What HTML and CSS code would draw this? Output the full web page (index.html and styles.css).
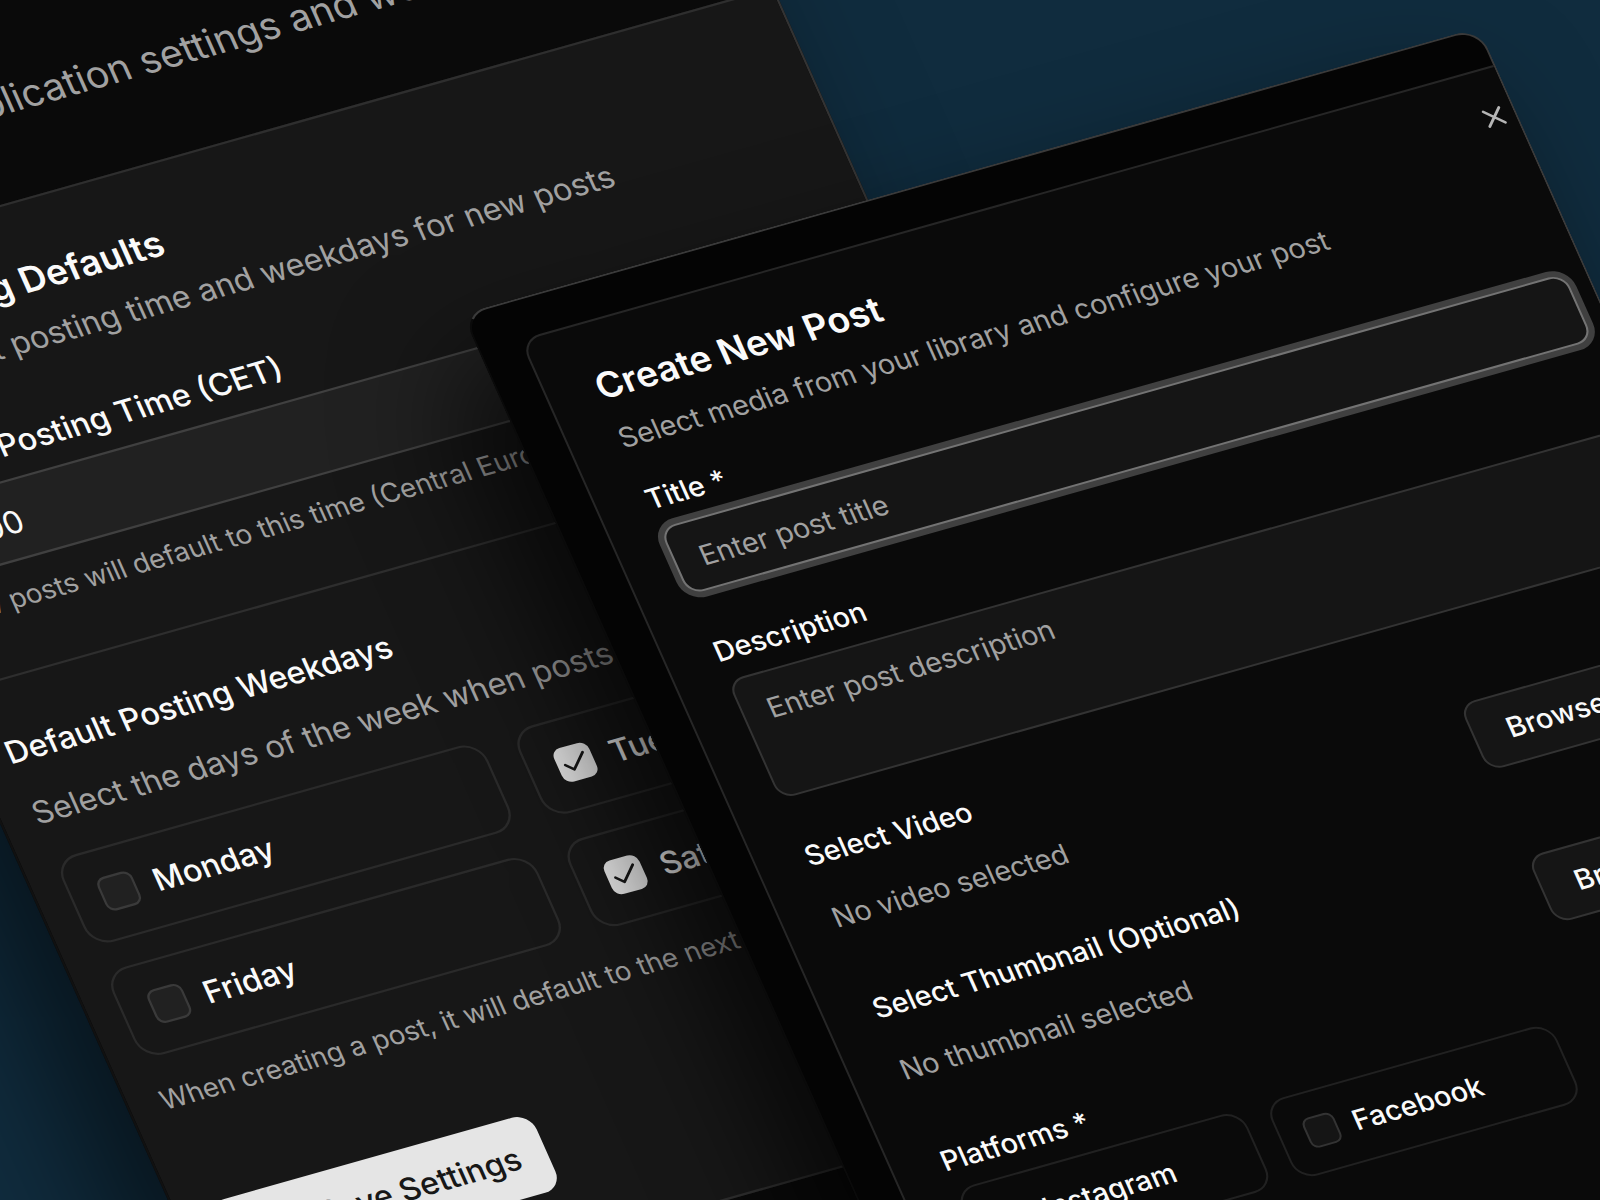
FILE: index.html
```html
<!DOCTYPE html>
<html lang="en">
<head>
  <meta charset="UTF-8">
  <title>Create New Post</title>
  <link rel="stylesheet" href="styles.css">
</head>
<body>

<main class="scene">
  <section class="screen settings">
    <header class="page-header">
      <p>Configure application settings and workflow</p>
    </header>
    <form class="card">
      <div class="card-header">
        <h2>Scheduling Defaults</h2>
        <p>Set default posting time and weekdays for new posts</p>
      </div>
      <div class="field">
        <label for="time">Default Posting Time (CET)</label>
        <input class="input" type="text" id="time" value="12:00">
        <p class="hint">New posts will default to this time (Central European Time)</p>
      </div>
      <hr>
      <fieldset class="weekdays">
        <legend>Default Posting Weekdays</legend>
        <p>Select the days of the week when posts should go out</p>
        <div class="days">
          <label class="option"><input type="checkbox">Monday</label>
          <label class="option"><input type="checkbox" checked>Tuesday</label>
          <label class="option"><input type="checkbox">Friday</label>
          <label class="option"><input type="checkbox" checked>Saturday</label>
        </div>
        <p class="hint">When creating a post, it will default to the next selected weekday</p>
      </fieldset>
      <button type="submit" class="save">
        <svg viewBox="0 0 24 24" width="16" height="16" fill="none" stroke="currentColor" stroke-width="2" stroke-linecap="round" stroke-linejoin="round"><path d="M15.2 3a2 2 0 0 1 1.4.6l3.8 3.8a2 2 0 0 1 .6 1.4V19a2 2 0 0 1-2 2H5a2 2 0 0 1-2-2V5a2 2 0 0 1 2-2z"/><path d="M17 21v-7a1 1 0 0 0-1-1H8a1 1 0 0 0-1 1v7M7 3v4a1 1 0 0 0 1 1h7"/></svg>
        Save Settings
      </button>
    </form>
  </section>

  <section class="screen post">
    <form class="dialog">
      <button type="button" class="close" aria-label="Close">
        <svg viewBox="0 0 24 24" width="16" height="16" fill="none" stroke="currentColor" stroke-width="2" stroke-linecap="round"><path d="M18 6 6 18M6 6l12 12"/></svg>
      </button>
      <div class="dialog-header">
        <h2>Create New Post</h2>
        <p>Select media from your library and configure your post</p>
      </div>
      <div class="fields">
        <div class="field">
          <label for="title">Title *</label>
          <input class="input focused" type="text" id="title" placeholder="Enter post title">
        </div>
        <div class="field">
          <label for="description">Description</label>
          <textarea class="input" id="description" placeholder="Enter post description"></textarea>
        </div>
        <div class="field">
          <h3>Select Video</h3>
          <div class="picker">
            <p>No video selected</p>
            <button type="button" class="browse">Browse Library</button>
          </div>
        </div>
        <div class="field">
          <h3>Select Thumbnail (Optional)</h3>
          <div class="picker">
            <p>No thumbnail selected</p>
            <button type="button" class="browse">Browse Library</button>
          </div>
        </div>
        <div class="field">
          <h3>Platforms *</h3>
          <div class="platforms">
            <label class="option"><input type="checkbox">Instagram</label>
            <label class="option"><input type="checkbox">Facebook</label>
          </div>
        </div>
      </div>
    </form>
  </section>
</main>

</body>
</html>
```
FILE: styles.css
```css
* {
  box-sizing: border-box;
}

body {
  margin: 0;
  background: #102c3e;
  color: #fafafa;
  font-family: Inter, sans-serif;
  font-size: 14px;
  line-height: 20px;
}

h2, h3, p {
  margin: 0;
}

button, input, textarea {
  font: inherit;
  color: inherit;
}

.scene {
  position: relative;
  height: 100vh;
  overflow: hidden;
}

/* Both screens lie on the same tilted plane */
.screen {
  position: absolute;
  left: 0;
  top: 0;
  overflow: hidden;
  transform-origin: 0 0;
}

.settings {
  width: 464px;
  padding-bottom: 80px;
  background: #0a0a0a;
  border: 1px solid #333;
  border-left-color: #111;
  box-shadow: -24px 28px 56px rgba(0, 0, 0, 0.55);
  transform: matrix(0.9625, -0.2714, 0.4073, 0.9133, -245, 274) scale(2.28) translateY(-90px);
}

.post {
  width: 519px;
  height: 640px;
  padding: 19px 0 0 20px;
  background: #040404;
  border: 1px solid #3a3a3a;
  border-left-color: #0a0a0a;
  border-radius: 12px;
  box-shadow: -24px 28px 56px rgba(0, 0, 0, 0.65);
  transform: matrix(0.9625, -0.2714, 0.4073, 0.9133, 462, 314) scale(2.035);
}

.page-header {
  height: 89px;
  padding: 33px 16px 0;
  color: #a1a1a1;
  font-size: 17px;
  line-height: 24px;
}

.card {
  display: flex;
  flex-direction: column;
  padding: 24px 14px;
  background: #171717;
  border: solid #2e2e2e;
  border-width: 1px 0;
}

.card-header,
.dialog-header {
  display: grid;
  gap: 8px;
  color: #a1a1a1;
}

.card-header {
  gap: 6px;
}

h2 {
  color: #fafafa;
  font-size: 18px;
  font-weight: 600;
  line-height: 18px;
}

.card h2 {
  font-size: 16px;
  line-height: 20px;
}

h3,
.field > label,
legend {
  font-size: 14px;
  font-weight: 500;
  line-height: 14px;
}

.field {
  display: grid;
  gap: 8px;
}

.card > .field {
  margin-top: 25px;
}

.input {
  width: 100%;
  height: 36px;
  padding: 4px 12px;
  background: #151515;
  border: 1px solid #333;
  border-radius: 8px;
  outline: none;
}

.card .input {
  background: #212121;
  border-color: #404040;
}

textarea.input {
  display: block;
  height: 64px;
  padding: 8px 12px;
  resize: none;
}

.input::placeholder {
  color: #a1a1a1;
  opacity: 1;
}

.input.focused {
  border-color: #737373;
  box-shadow: 0 0 0 3px #404040;
}

.hint {
  color: #a1a1a1;
  font-size: 12px;
  line-height: 16px;
}

hr {
  width: 100%;
  height: 1px;
  margin: 24px 0 25px;
  background: #2e2e2e;
  border: 0;
}

.weekdays {
  display: grid;
  gap: 12px;
  margin: 0;
  padding: 0;
  border: 0;
  color: #a1a1a1;
}

legend {
  padding: 0;
  margin-bottom: 12px;
  color: #fafafa;
}

.days {
  display: grid;
  grid-template-columns: repeat(2, 194px);
  gap: 12px 14px;
}

.option {
  display: flex;
  align-items: center;
  gap: 8px;
  padding: 12px;
  border: 1px solid #2a2a2a;
  border-radius: 10px;
  color: #fafafa;
  font-weight: 500;
  line-height: 16px;
}

.option input {
  appearance: none;
  flex: none;
  width: 16px;
  height: 16px;
  margin: 0;
  background: #212121;
  border: 1px solid #3a3a3a;
  border-radius: 4px;
}

.option input:checked {
  background: #e5e5e5 url("data:image/svg+xml,%3Csvg xmlns='http://www.w3.org/2000/svg' viewBox='0 0 24 24' fill='none' stroke='%23171717' stroke-width='2' stroke-linecap='round' stroke-linejoin='round'%3E%3Cpath d='M20 6 9 17l-5-5'/%3E%3C/svg%3E") center / 14px no-repeat;
  border-color: #e5e5e5;
}

.save {
  display: flex;
  align-items: center;
  align-self: flex-start;
  gap: 16px;
  height: 36px;
  margin-top: 41px;
  padding: 0 12px;
  background: #e5e5e5;
  border: 0;
  border-radius: 8px;
  color: #171717;
  font-weight: 500;
}

.dialog {
  position: relative;
  width: 512px;
  height: 700px;
  padding: 24px;
  background: #0a0a0a;
  border: 1px solid #262626;
  border-radius: 10px;
}

.close {
  position: absolute;
  top: 16px;
  right: 16px;
  display: flex;
  padding: 0;
  background: none;
  border: 0;
  color: #b5b5b5;
}

.fields {
  display: grid;
  gap: 24px;
  margin-top: 16px;
}

.picker {
  display: flex;
  align-items: center;
  justify-content: space-between;
  color: #a1a1a1;
}

.browse {
  height: 36px;
  padding: 0 16px;
  background: #151515;
  border: 1px solid #333;
  border-radius: 8px;
  color: #fafafa;
  font-weight: 500;
}

.platforms {
  display: grid;
  grid-template-columns: repeat(3, 1fr);
  gap: 12px;
}

.platforms .option {
  border-color: #212121;
}

.platforms .option input {
  background: #151515;
  border-color: #333;
}
```
